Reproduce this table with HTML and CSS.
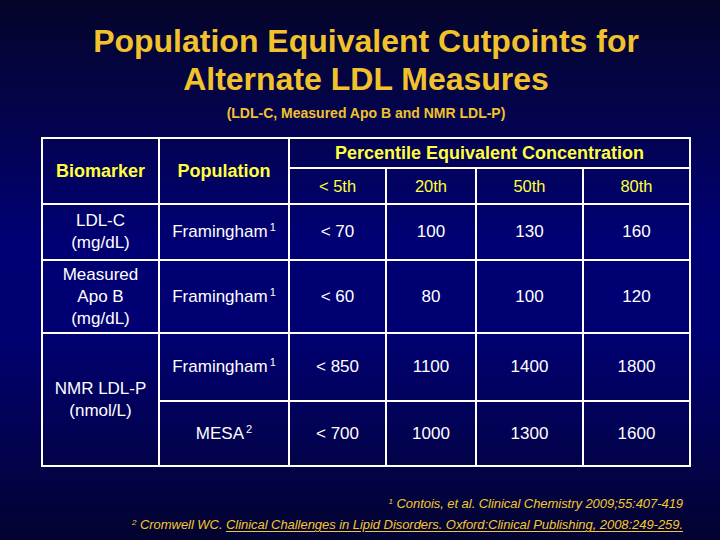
FILE: index.html
```html
<!DOCTYPE html>
<html>
<head>
<meta charset="utf-8">
<link rel="stylesheet" href="styles.css">
</head>
<body>
<div class="slide">
  <header class="head">
    <h1 class="title">Population Equivalent Cutpoints for<br>Alternate LDL Measures</h1>
    <p class="subtitle">(LDL-C, Measured Apo B and NMR LDL-P)</p>
  </header>
  <table class="grid">
    <colgroup>
      <col class="c1"><col class="c2"><col class="c3"><col class="c4"><col class="c5"><col class="c6">
    </colgroup>
    <tr class="h1">
      <th rowspan="2" class="hb">Biomarker</th>
      <th rowspan="2" class="hb">Population</th>
      <th colspan="4" class="hb">Percentile Equivalent Concentration</th>
    </tr>
    <tr class="h2">
      <th class="hp">&lt; 5th</th>
      <th class="hp">20th</th>
      <th class="hp">50th</th>
      <th class="hp">80th</th>
    </tr>
    <tr class="r1">
      <td>LDL-C<br>(mg/dL)</td>
      <td>Framingham<sup>1</sup></td>
      <td>&lt; 70</td><td>100</td><td>130</td><td>160</td>
    </tr>
    <tr class="r2">
      <td>Measured<br>Apo B<br>(mg/dL)</td>
      <td>Framingham<sup>1</sup></td>
      <td>&lt; 60</td><td>80</td><td>100</td><td>120</td>
    </tr>
    <tr class="r3">
      <td rowspan="2">NMR LDL-P<br>(nmol/L)</td>
      <td>Framingham<sup>1</sup></td>
      <td>&lt; 850</td><td>1100</td><td>1400</td><td>1800</td>
    </tr>
    <tr class="r4">
      <td>MESA<sup>2</sup></td>
      <td>&lt; 700</td><td>1000</td><td>1300</td><td>1600</td>
    </tr>
  </table>
  <footer class="notes">
    <p class="note"><sup>1</sup> Contois, et al. Clinical Chemistry 2009;55:407-419</p>
    <p class="note"><sup>2</sup> Cromwell WC. <u>Clinical Challenges in Lipid Disorders. Oxford:Clinical Publishing, 2008:249-259.</u></p>
  </footer>
</div>
</body>
</html>
```
FILE: styles.css
```css
html, body {
  margin: 0;
  padding: 0;
}
body {
  width: 720px;
  height: 540px;
  overflow: hidden;
  font-family: "Liberation Sans", Arial, sans-serif;
  background: linear-gradient(to bottom, #05052a 0%, #03034e 22%, #000074 45%, #000072 62%, #020250 82%, #030330 100%);
}
.slide {
  width: 720px;
  height: 540px;
  display: flex;
  flex-direction: column;
}
.head {
  padding-top: 22px;
  text-align: center;
}
.title {
  margin: 0;
  padding-left: 12px;
  font-size: 32px;
  line-height: 38px;
  font-weight: bold;
  color: #f2c22c;
}
.subtitle {
  margin: 7px 0 0 0;
  padding-left: 12px;
  font-size: 14px;
  line-height: 16px;
  font-weight: bold;
  color: #f2c22c;
}
.grid {
  margin: 16px 0 0 41px;
  width: 650px;
  border-collapse: collapse;
  border: 2px solid #fff;
  table-layout: fixed;
}
.c1 { width: 117px; }
.c2 { width: 130px; }
.c3 { width: 97px; }
.c4 { width: 90px; }
.c5 { width: 107px; }
.c6 { width: 107px; }
.grid th, .grid td {
  border: 2px solid #fff;
  padding: 0;
  text-align: center;
  vertical-align: middle;
}
.grid th {
  color: #ffff3c;
}
.hb {
  font-size: 18px;
  font-weight: bold;
}
.hp {
  font-size: 16.5px;
  font-weight: normal;
}
.grid td {
  color: #fff;
  font-size: 17px;
  line-height: 22px;
}
.grid sup {
  font-size: 11px;
  vertical-align: 6px;
  line-height: 0;
  margin-left: 2px;
}
.h1 { height: 30px; }
.h2 { height: 36px; }
.r1 { height: 56px; }
.r2 { height: 73px; }
.r3 { height: 68px; }
.r4 { height: 65px; }
.notes {
  margin-top: 29px;
  padding-right: 37px;
  text-align: right;
}
.note {
  margin: 0 0 6px 0;
  font-size: 13px;
  line-height: 15px;
  font-style: italic;
  color: #f5c82a;
  letter-spacing: -0.05px;
}
.note sup {
  font-size: 8px;
  vertical-align: 4px;
  line-height: 0;
}
.note u {
  text-decoration-thickness: 1px;
  text-underline-offset: 2px;
}
```
